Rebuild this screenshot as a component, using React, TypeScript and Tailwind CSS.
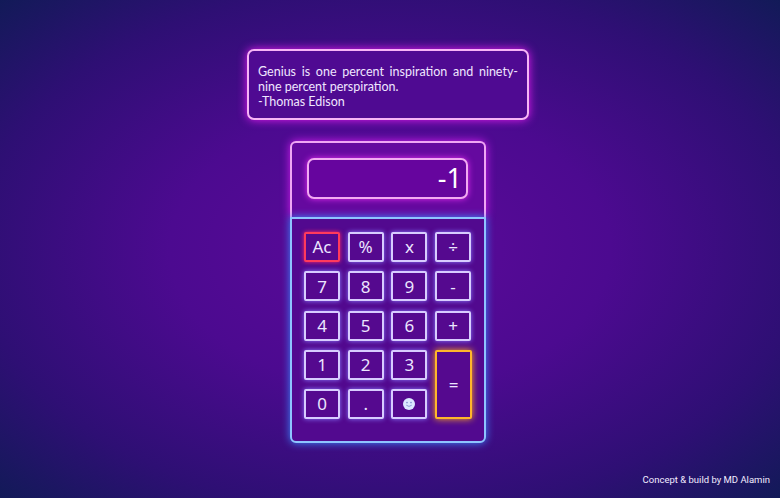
import React from "react";

const keys = ["Ac", "%", "x", "÷", "7", "8", "9", "-", "4", "5", "6", "+", "1", "2", "3"];

function Smile() {
  return (
    <svg width="14" height="14" viewBox="0 0 14 14">
      <circle cx="7" cy="7" r="6" fill="#dbe8ff" />
      <circle cx="5" cy="5.6" r="0.8" fill="#7a8ccc" />
      <circle cx="9" cy="5.6" r="0.8" fill="#7a8ccc" />
      <path d="M4.3 8.2 Q7 10.6 9.7 8.2" stroke="#7a8ccc" strokeWidth="0.8" fill="none" />
    </svg>
  );
}

function Key({ label }: { label: string }) {
  const ac = label === "Ac";
  return (
    <button
      className={
        "flex h-[30px] w-[36px] items-center justify-center rounded-[2px] border-2 bg-[#55098f] text-[17px] text-[#ece6ff] " +
        (ac
          ? "border-[#ff3a5c] shadow-[0_0_4px_#ff2a6a]"
          : "border-[#d8ccff] shadow-[0_0_5px_#8a7cff]")
      }
    >
      {label}
    </button>
  );
}

export default function App() {
  return (
    <div
      className="flex h-[498px] w-[780px] flex-col items-center overflow-hidden bg-[radial-gradient(ellipse_at_50%_50%,#5c0a9a_0%,#4c0a90_40%,#2e0f74_75%,#121a58_100%)] pr-[4px]"
      style={{ fontFamily: "'Noto Sans', 'Open Sans', sans-serif" }}
    >
      <div
        className="mt-[49px] h-[71px] w-[282px] rounded-[7px] border-2 border-[#f6b4f6] bg-[#4f0a92] px-[9px] pt-[13px] text-justify text-[12.5px] leading-[15px] text-[#efe6ff] shadow-[0_0_10px_#e21cf0]"
        style={{ fontFamily: "Lato, 'Noto Sans', sans-serif" }}
      >
        <p className="[text-align-last:justify]">Genius is one percent inspiration and ninety-</p>
        <p>nine percent perspiration.</p>
        <p>-Thomas Edison</p>
      </div>

      <div className="mt-[21px] flex w-[196px] flex-col">
        <div className="flex h-[76px] items-start rounded-t-[6px] border-2 border-b-0 border-[#f0a6f4] bg-[#65099f] px-[15px] pt-[15px] shadow-[0_0_10px_#d21ef0]">
          <div className="flex h-[41px] w-[161px] items-center justify-end rounded-[7px] border-2 border-[#f2aaf2] bg-[#66059e] pr-[4px] text-[27px] text-white shadow-[0_0_6px_#e22cf0]">
            -1
          </div>
        </div>
        <div className="h-[226px] rounded-b-[6px] border-2 border-[#8ec4ff] bg-[#52098f] px-[12px] pt-[13px] shadow-[0_0_8px_#3a8cff]">
          <div className="grid grid-cols-[36px_36px_36px_37px] gap-x-[7.7px] gap-y-[9.3px]">
            {keys.map((k) => (
              <Key key={k} label={k} />
            ))}
            <button className="col-start-4 row-span-2 row-start-4 flex w-[37px] items-center justify-center rounded-[2px] border-2 border-[#ffb62a] bg-[#55098f] text-[17px] text-[#ece6ff] shadow-[0_0_7px_#ffae1a]">
              =
            </button>
            <Key label="0" />
            <Key label="." />
            <button className="flex h-[30px] w-[36px] items-center justify-center rounded-[2px] border-2 border-[#d8ccff] bg-[#55098f] shadow-[0_0_5px_#8a7cff]">
              <Smile />
            </button>
          </div>
        </div>
      </div>

      <div
        className="mt-auto mb-[11px] self-end pr-[6px] text-[9.5px] text-[#f2ecff]"
        style={{ fontFamily: "Roboto, sans-serif" }}
      >
        Concept &amp; build by MD Alamin
      </div>
    </div>
  );
}
